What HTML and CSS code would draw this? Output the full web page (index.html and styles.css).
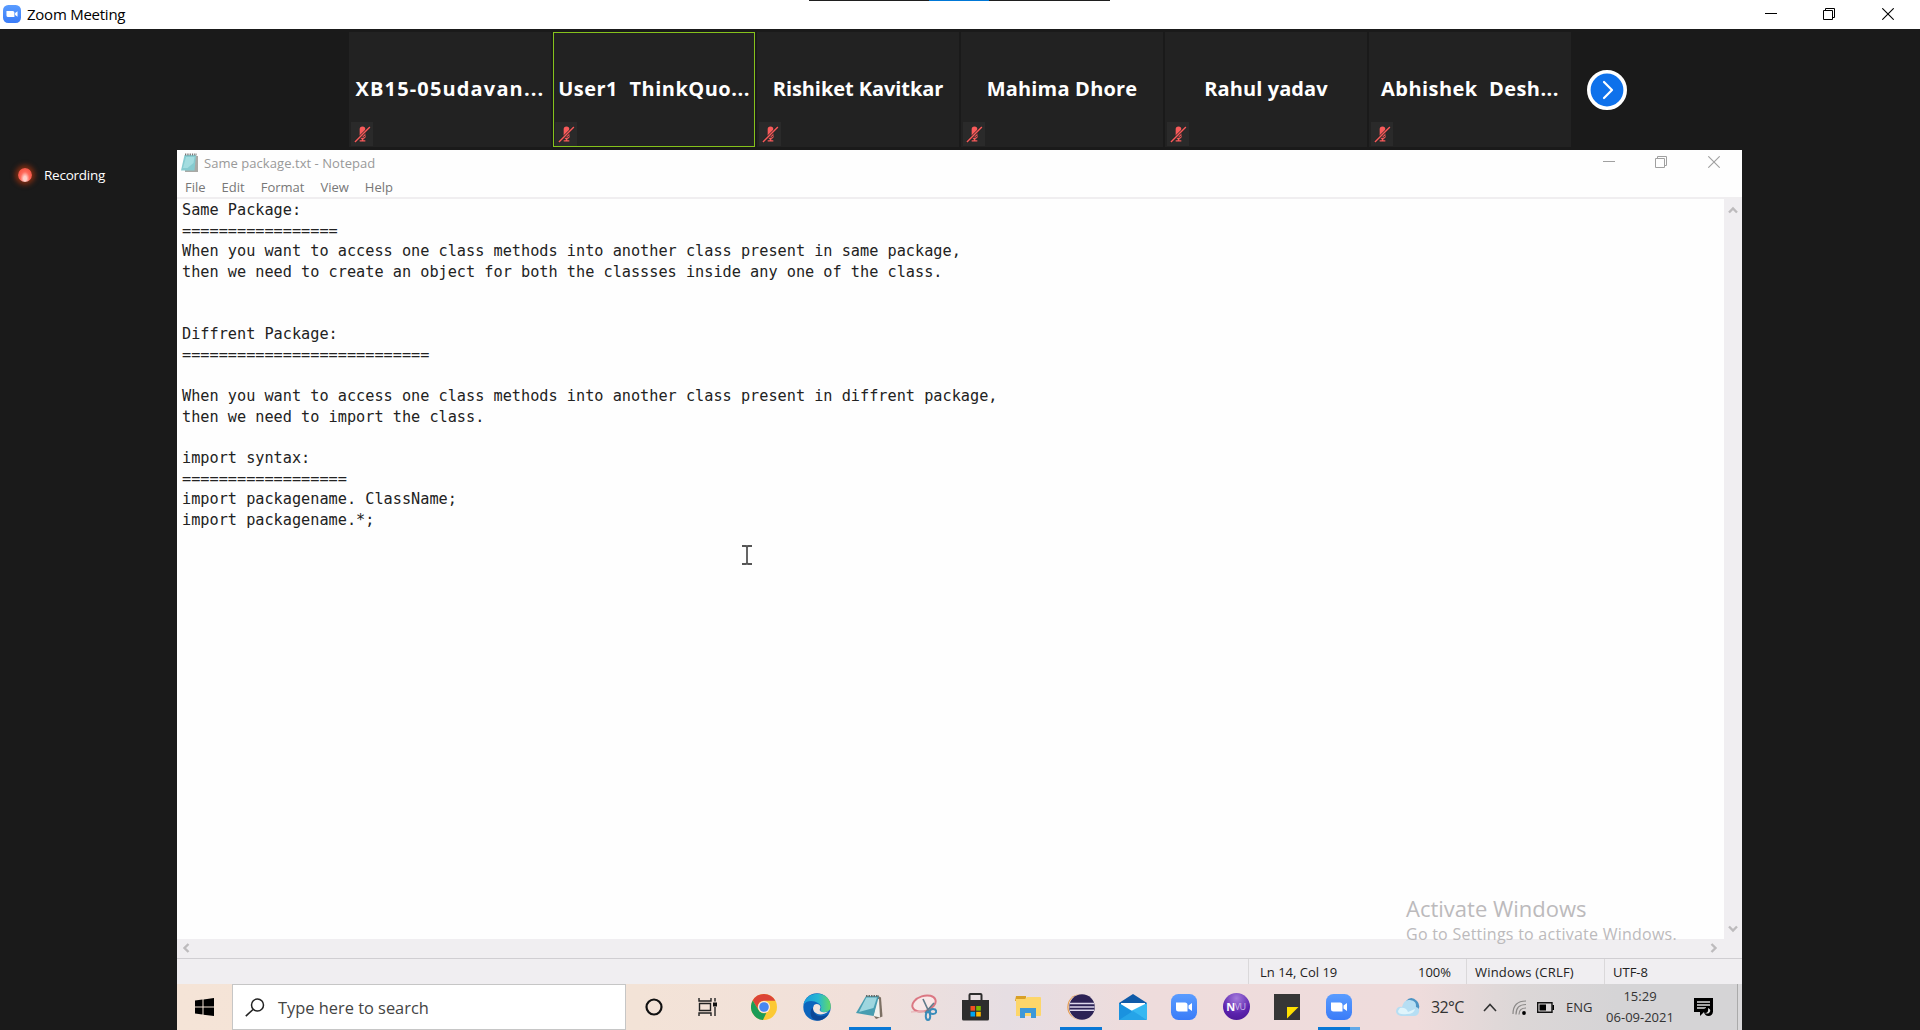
FILE: index.html
```html
<!DOCTYPE html>
<html lang="en">
<head>
<meta charset="utf-8">
<title>Zoom Meeting</title>
<link rel="stylesheet" href="styles.css">
</head>
<body>
<svg class="defs" width="0" height="0">
  <defs>
    <linearGradient id="zoomBlue" x1="0" y1="0" x2="0" y2="1"><stop offset="0" stop-color="#5a9cff"/><stop offset="1" stop-color="#3a7cf8"/></linearGradient>
    <symbol id="zoom" viewBox="0 0 26 26"><rect width="26" height="26" rx="7.5" fill="url(#zoomBlue)"/><path d="M5 8.500h9q2.500 0 2.500 2.500v6.500h-9Q5 17.500 5 15zM17.500 11.500l3.500-2.500v8l-3.500-2.500z" fill="#fff"/></symbol>
    <symbol id="muted" viewBox="0 0 18 18"><path d="M6 3.500a3 3 0 0 1 6 0v5a3 3 0 0 1-6 0zM5.500 8q0 4.500 3.500 4.500T12.500 8v2.500q0 2.500-2.600 3.300V15H12v1.500H6V15h2.200v-1.200q-2.700-.8-2.700-3.300z" fill="#f95a5a"/><path d="M.5 17.500L17 1" stroke="#252525" stroke-width="3"/><path d="M1 17L16.800 1" stroke="#f95a5a" stroke-width="1.500"/></symbol>
    <symbol id="min" viewBox="0 0 12 12"><path d="M0 5.500h12" stroke="currentColor"/></symbol>
    <symbol id="restore" viewBox="0 0 12 12"><path d="M.5 2.500h9v9h-9zM2.500 2.500v-2h9v9h-2" fill="none" stroke="currentColor"/></symbol>
    <symbol id="close" viewBox="0 0 12 12"><path d="M.3.300l11.400 11.400M11.700.3L.3 11.700" stroke="currentColor" stroke-width="1.100"/></symbol>
    <symbol id="chev" viewBox="0 0 10 8"><path d="M1 6.500l4-4 4 4" fill="none" stroke="currentColor" stroke-width="2.400"/></symbol>
  </defs>
</svg>

<header class="titlebar">
  <svg class="app-icon"><use href="#zoom"/></svg>
  <span class="app-name">Zoom Meeting</span>
  <div class="window-buttons">
    <svg><use href="#min"/></svg><svg><use href="#restore"/></svg><svg><use href="#close"/></svg>
  </div>
  <div class="share-strip"></div>
</header>

<section class="gallery">
  <div class="tile"><span class="n1">XB15-05udavan...</span><i class="mic"><svg><use href="#muted"/></svg></i></div>
  <div class="tile active"><span class="n2">User1&nbsp; ThinkQuo...</span><i class="mic"><svg><use href="#muted"/></svg></i></div>
  <div class="tile"><span class="n3">Rishiket Kavitkar</span><i class="mic"><svg><use href="#muted"/></svg></i></div>
  <div class="tile"><span class="n4">Mahima Dhore</span><i class="mic"><svg><use href="#muted"/></svg></i></div>
  <div class="tile"><span class="n5">Rahul yadav</span><i class="mic"><svg><use href="#muted"/></svg></i></div>
  <div class="tile"><span class="n6">Abhishek&nbsp; Desh...</span><i class="mic"><svg><use href="#muted"/></svg></i></div>
  <button class="next" aria-label="Next"><svg viewBox="0 0 40 40"><circle cx="20" cy="20" r="18.200" fill="#0e71eb" stroke="#fff" stroke-width="3.600"/><path d="M17 12l8 8-8 8" fill="none" stroke="#fff" stroke-width="2.200" stroke-linecap="round" stroke-linejoin="round"/></svg></button>
</section>

<main class="stage">
  <aside class="recording"><i class="rec-dot"></i><span>Recording</span></aside>

  <div class="desktop">
    <div class="np-title">
      <svg class="np-icon" viewBox="0 0 18 20"><path d="M4 2l13 1v16H4z" fill="#a9a9a5"/><path d="M3.500 2H15l-1.500 15.500H0z" fill="#86cbd0"/><path d="M5 4h8.500l-1 6-6 5H2z" fill="#a3dde0"/><path d="M4 1.500h12" stroke="#777" stroke-width="2" stroke-dasharray="1.300 1"/></svg>
      <span>Same package.txt - Notepad</span>
      <div class="np-buttons"><svg><use href="#min"/></svg><svg><use href="#restore"/></svg><svg><use href="#close"/></svg></div>
    </div>
    <nav class="menu"><span>File</span><span>Edit</span><span>Format</span><span>View</span><span>Help</span></nav>
    <div class="np-body">
<pre class="text">Same Package:
=================
When you want to access one class methods into another class present in same package,
then we need to create an object for both the classses inside any one of the class.


Diffrent Package:
===========================

When you want to access one class methods into another class present in diffrent package,
then we need to import the class.

import syntax:
==================
import packagename. ClassName;
import packagename.*;</pre>
      <div class="vscroll"><svg><use href="#chev"/></svg><svg class="down"><use href="#chev"/></svg></div>
      <svg class="ibeam" viewBox="0 0 10 20"><path d="M0 1h4l1 1 1-1h4M0 19h4l1-1 1 1h4M5 2v16" fill="none" stroke="#555" stroke-width="1.800"/></svg>
    </div>
    <div class="hscroll"><svg class="left"><use href="#chev"/></svg><svg class="right"><use href="#chev"/></svg></div>
    <div class="status"><span></span><span>Ln 14, Col 19</span><span>100%</span><span class="crlf">Windows (CRLF)</span><span>UTF-8</span></div>
    <div class="watermark"><p class="big">Activate Windows</p><p class="small">Go to Settings to activate Windows.</p></div>

    <footer class="taskbar">
      <div class="start"><svg width="19" height="18" viewBox="0 0 19 18"><path d="M0 2.600l7.500-1v7H0zM8.500 1.400L19 0v8.600H8.500zM0 9.600h7.500v7L0 15.600zM8.500 9.600H19V18L8.500 16.800z"/></svg></div>
      <div class="search"><svg width="20" height="19" viewBox="0 0 20 19"><circle cx="12.500" cy="7" r="6" fill="none" stroke="#222" stroke-width="1.500"/><path d="M8 11.500L.8 18.200" stroke="#222" stroke-width="1.600"/></svg><span>Type here to search</span></div>
      <div class="apps">
        <div class="app"><svg width="18" height="18" viewBox="0 0 18 18"><circle cx="9" cy="9" r="7.500" fill="none" stroke="#111" stroke-width="2.200"/></svg></div>
        <div class="app"><svg width="20" height="18" viewBox="0 0 20 18"><path d="M1 0v3h12V0M1 18v-3h12v3M1.500 5.500h11v7h-11zM17 0v3.500M17 9v9" fill="none" stroke="#222" stroke-width="1.400"/><path d="M15 4.500h4v4h-4z" fill="#111"/></svg></div>
        <div class="app"><svg width="26" height="26" viewBox="0 0 26 26"><circle cx="13" cy="13" r="13" fill="#fcc934"/><path d="M1.700 6.500A13 13 0 0 1 24.300 6.800H13a6.300 6.300 0 0 0-5.600 9.200z" fill="#dc4437"/><path d="M1.700 6.500L7.500 16a6.300 6.300 0 0 0 7.800 2.900L12 26A13 13 0 0 1 1.700 6.500z" fill="#1b9c57"/><circle cx="13" cy="13" r="6.100" fill="#fbe9e0"/><circle cx="13" cy="13" r="4.800" fill="#4687f2"/></svg></div>
        <div class="app"><svg width="28" height="28" viewBox="0 0 28 28"><defs><linearGradient id="edgeTop"><stop offset="0" stop-color="#199bdc"/><stop offset=".55" stop-color="#27b7d2"/><stop offset="1" stop-color="#65db62"/></linearGradient></defs><circle cx="14" cy="14" r="13.700" fill="#0c65bd"/><path d="M.6 11.500C3-3 27-3 27.700 13c.2 5-4 6.500-8 6-3-.5-2.700-2-1.700-3.400C20 10 6 4 .6 11.500z" fill="url(#edgeTop)"/><path d="M10 15c0 8 8 10.500 15.500 6C18 32 5 28 8 17q.7-2 2-2z" fill="#0b4797"/><path d="M11 12c4-3 8 1 6 4-1.400 2.200 3 4.500 8.500 2.500C18 24 10 21 10 15z" fill="#f1e5df"/></svg></div>
        <div class="app running"><svg width="27" height="26" viewBox="0 0 27 26"><path d="M21 1.500l4 2 1.500 19L20 25l-3-4z" fill="#7d7064"/><path d="M21 5l-3.500 17 6.500 1.500L23 5z" fill="#f2f1ed"/><path d="M10 2h13l-5.500 20L0 19z" fill="#489db1"/><path d="M10.300 3.500H21L17.500 14 3 18z" fill="#9ed6df"/><path d="M10 2h13" stroke="#656d6b" stroke-width="2" stroke-dasharray="1.500 1"/></svg></div>
        <div class="app"><svg width="27" height="27" viewBox="0 0 27 27"><ellipse cx="14" cy="9.500" rx="12" ry="7.500" transform="rotate(-18 14 9.500)" fill="#f8e8e8" stroke="#db7783" stroke-width="2"/><path d="M1 18l16-1" stroke="#e7aab0"/><path d="M13 5l6 13M24 9l-9 10" stroke="#627b8b" stroke-width="1.700"/><g fill="none" stroke="#398cba" stroke-width="2"><ellipse cx="18" cy="22" rx="2.200" ry="4"/><ellipse cx="23" cy="17.500" rx="3.200" ry="2.500"/></g></svg></div>
        <div class="app"><svg width="27" height="28" viewBox="0 0 27 28"><path d="M7.500 8V2q0-1 1-1h10q1 0 1 1v6" fill="none" stroke="#2d2d2d" stroke-width="2"/><path d="M0 7h27v19q0 1.500-1.500 1.500h-24Q0 27.500 0 26z" fill="#2d2d2d"/><path d="M8.500 13h4.600v4.700H8.500z" fill="#f25022"/><path d="M14.200 13h4.600v4.700h-4.600z" fill="#7fba00"/><path d="M8.500 18.800h4.600v4.700H8.500z" fill="#00a4ef"/><path d="M14.200 18.800h4.600v4.700h-4.600z" fill="#ffb900"/></svg></div>
        <div class="app"><svg width="26" height="22" viewBox="0 0 26 22"><path d="M1 0h10v5H0z" fill="#d9a027"/><path d="M1 3h9l2-2h13q1 0 1 1v17q0 1-1 1H1z" fill="#fdd66a"/><path d="M5 12h16v10h-5v-5h-6v5H5z" fill="#3d98d8"/></svg></div>
        <div class="app running"><svg width="28" height="26" viewBox="0 0 28 26"><circle cx="13" cy="13" r="12.700" fill="#e59a4c"/><circle cx="14.500" cy="13" r="13" fill="#f0e6e8"/><circle cx="15" cy="13" r="12.800" fill="#2c2255"/><path d="M3 9.500h24M2.500 13h25M3 16.300h24" stroke="#ddd8ed" stroke-width="1.600"/></svg></div>
        <div class="app"><svg width="28" height="26" viewBox="0 0 28 26"><path d="M0 9l14-9 14 9v5H0z" fill="#0f5aa8"/><path d="M2 9h24v9H2z" fill="#fff"/><path d="M0 9l28 17H0z" fill="#1a92df"/><path d="M28 9v17L12 17z" fill="#35b8f2"/><path d="M0 26h28L14 17z" fill="#25a4e8"/></svg></div>
        <div class="app"><svg width="26" height="26"><use href="#zoom"/></svg></div>
        <div class="app nvu"><b>N</b>VU</div>
        <div class="app"><svg width="26" height="26" viewBox="0 0 26 26"><path d="M0 0h26v13L13 26H0z" fill="#363636"/><path d="M13 26V13h13v13z" fill="#363636"/><path d="M13 13h11.500L13 24.500z" fill="#ffe000"/></svg></div>
        <div class="app running zoom-app"><svg width="26" height="26"><use href="#zoom"/></svg></div>
      </div>
      <div class="tray">
        <svg class="weather" viewBox="0 0 24 19"><path d="M10 3q5-6 11 0 4 4 1 10L12 9z" fill="#4c94c4"/><path d="M5 18q-5-1-5-5 1-5 6-4Q8 1 14 2q7 1 6 7 4 1 3 5-1 4-5 4z" fill="#b6def3"/><path d="M4 10q6-1 8 4l7-3q-1 5-8 5-9 1-9-3z" fill="#dff4fb"/></svg>
        <span class="temp">32°C</span>
        <svg class="up" viewBox="0 0 14 9"><path d="M1 8l6-6.500L13 8" fill="none" stroke="#333" stroke-width="1.600"/></svg>
        <svg class="wifi" viewBox="0 0 15 15"><g fill="none" stroke="#8b8988" stroke-width="1.200"><path d="M1 14Q1 1 14 1M4 14.500Q4 4.500 14 4.500M7 14.500Q7 8 14 8"/></g><circle cx="12" cy="13" r="1.900"/></svg>
        <svg class="battery" viewBox="0 0 17 11"><path d="M.7.700h14.300v9.600H.7z" fill="none" stroke="#111" stroke-width="1.400"/><path d="M2.500 2.500h6.500v6H2.500zM15.500 3H17v5h-1.500z"/></svg>
        <span class="lang">ENG</span>
        <div class="clock"><span>15:29</span><span class="date">06-09-2021</span></div>
        <svg class="notice" viewBox="0 0 19 19"><path d="M0 0h19v14h-9l-4 4v-4H0z"/><path d="M3 4h13M3 7h13M3 10h9" stroke="#ddd" stroke-width="1.300"/><circle cx="14.500" cy="13.500" r="4.500"/><path d="M14 10q4 2 1 5-2 1-4 0 4 0 3-5z" fill="#ddd"/></svg>
      </div>
    </footer>
  </div>
</main>
</body>
</html>
```
FILE: styles.css
```css
* { box-sizing: border-box; }
body {
  margin: 0;
  width: 1920px;
  height: 1030px;
  overflow: hidden;
  background: #1a1a1a;
  font-family: "Open Sans", "Noto Sans", sans-serif;
  display: flex;
  flex-direction: column;
}
.defs { position: absolute; }
svg { display: block; flex: none; }
p { margin: 0; }

/* Meeting window */
.titlebar {
  position: relative;
  flex: none;
  height: 29px;
  background: #fff;
  display: flex;
  align-items: center;
  padding: 0 26px 0 3px;
}
.app-icon { width: 18px; height: 18px; margin-top: -1px; }
.app-name { margin: -2px 0 0 6px; font-size: 15px; letter-spacing: -0.25px; color: #000; white-space: nowrap; }
.window-buttons { margin: -1px 0 0 auto; display: flex; gap: 46px; }
.window-buttons svg { width: 12px; height: 12px; }
.window-buttons svg:last-child { margin-left: 1px; }
.share-strip {
  position: absolute;
  top: 0; left: 809px;
  width: 301px; height: 1px;
  background: linear-gradient(90deg, #1f1f1f 120px, #0078d7 120px 180px, #1f1f1f 180px);
}
.gallery {
  flex: none;
  height: 121px;
  padding: 3px 0 3px 349px;
  display: flex;
  gap: 2px;
}
.tile {
  position: relative;
  width: 202px;
  height: 115px;
  background: #222;
  color: #fff;
  font-size: 20px;
  font-weight: 700;
  white-space: nowrap;
  display: flex;
  align-items: center;
  justify-content: center;
}
.tile.active { outline: 1px solid #85c21c; outline-offset: -1px; }
.tile span { margin-top: -2px; }
.tile .n1 { letter-spacing: 1.15px; }
.tile .n2 { letter-spacing: 0.5px; }
.tile .n3 { letter-spacing: -0.07px; }
.tile .n4 { letter-spacing: 0.2px; }
.tile .n5 { letter-spacing: 0.1px; }
.tile .n6 { letter-spacing: 0.45px; }
.mic {
  position: absolute;
  left: 2px; bottom: 1px;
  width: 22px; height: 24px;
  background: #2a2a2a;
  display: grid;
  place-items: center;
}
.mic svg { width: 17px; height: 17px; }
.next { width: 40px; height: 40px; margin: 38px 0 0 14px; padding: 0; border: 0; background: none; }

/* Shared desktop */
.stage { flex: none; height: 880px; display: flex; }
.recording {
  flex: none;
  width: 177px;
  height: 50px;
  padding-left: 17px;
  display: flex;
  align-items: center;
  color: #fff;
  font-size: 13.5px;
  letter-spacing: -0.25px;
}
.rec-dot {
  width: 14px; height: 14px;
  margin-left: 1px;
  border-radius: 50%;
  background: radial-gradient(ellipse at 50% 75%, #ffd0c8 0 15%, #ff6b5c 45%, #e8402c 100%);
  box-shadow: 0 0 5px 3px #7c2c12;
}
.recording span { margin-left: 12px; }
.desktop {
  position: relative;
  width: 1565px;
  height: 880px;
  background: #fefefe;
  display: flex;
  flex-direction: column;
}
.np-title { height: 25px; padding: 1px 22px 0 4px; display: flex; align-items: center; color: #999; font-size: 13px; }
.np-icon { width: 18px; height: 20px; margin-top: 0; }
.np-title span { margin-left: 5px; white-space: nowrap; letter-spacing: 0.05px; }
.np-buttons { margin: -3px 0 0 auto; display: flex; gap: 40px; color: #a0a0a0; }
.np-buttons svg { width: 12px; height: 12px; }
.np-buttons svg:last-child { margin-left: 1px; }
.menu { height: 24px; padding: 2px 0 0 8px; border-bottom: 2px solid #f0eef0; display: flex; gap: 16px; align-items: center; color: #777; font-size: 13px; }
.np-body { position: relative; height: 740px; display: flex; justify-content: space-between; }
.text {
  margin: 0;
  padding: 1px 0 0 5px;
  font-family: "DejaVu Sans Mono", monospace;
  font-size: 15.23px;
  line-height: 20.65px;
  color: #222;
}
.vscroll { width: 18px; background: #f0eef1; color: #bdbbbd; display: flex; flex-direction: column; justify-content: space-between; align-items: center; padding: 7px 0 6px; }
.vscroll svg, .hscroll svg { width: 10px; height: 8px; }
.down { transform: rotate(180deg); }
.left { transform: rotate(-90deg); }
.right { transform: rotate(90deg); }
.ibeam { position: absolute; left: 565px; top: 346px; width: 10px; height: 20px; }
.hscroll { height: 20px; background: #f0eef1; border-bottom: 1px solid #d0ced2; display: flex; justify-content: space-between; align-items: center; padding: 0 23px 2px 4px; color: #bdbbbd; }
.status {
  height: 25px;
  background: #f0eef1;
  display: grid;
  grid-template-columns: 1071px 170px 48px 138px 1fr;
  color: #222;
  font-size: 13px;
  white-space: nowrap;
}
.status span { height: 25px; line-height: 26px; border-left: 1px solid #dad8da; padding-left: 11px; }
.status span:first-child { border: 0; }
.status span:nth-child(3) { border: 0; padding-left: 0; }
.status .crlf { padding-left: 8px; letter-spacing: 0.2px; }
.status span:last-child { padding-left: 8px; }
.watermark { position: absolute; left: 1229px; top: 743px; color: #bcbabc; white-space: nowrap; }
.big { font-size: 22px; line-height: 30px; }
.small { font-size: 16px; line-height: 23px; letter-spacing: 0.25px; }

/* Taskbar */
.taskbar {
  height: 46px;
  display: flex;
  background: linear-gradient(90deg, #f5e4d7 0, #f3e3d7 460px, #f1e0da 680px, #e6dee3 830px, #eedcdc 960px, #efdcdc 1240px, #dcd7d7 1340px, #d5d4d6 1440px, #d5d4d6 1560px, #aaa 1560px 1561px, #d9d8da 1561px);
}
.start { width: 55px; padding: 14px 0 0 18px; }
.search { width: 394px; height: 46px; background: #fff; border: 1px solid #c6c6c6; display: flex; align-items: center; padding-left: 12px; color: #444; font-size: 16.4px; white-space: nowrap; }
.search span { margin-left: 13px; }
.apps { width: 770px; display: grid; grid-template-columns: 55px 54px 58px 48px 57px 50px 54px 52px 54px 49px 54px 50px 52px 52px; }
.app { height: 46px; display: grid; place-items: center; position: relative; }
.running::after { content: ""; position: absolute; left: calc(50% - 21px); bottom: 0; width: 42px; height: 3px; background: #0a78d6; }
.zoom-app::after { background: linear-gradient(90deg, #0a78d6 32px, #62a9e8 32px); }
.nvu {
  width: 27px; height: 27px; margin: 9px auto 0;
  border-radius: 50%;
  display: flex; align-items: center; justify-content: center;
  background: radial-gradient(circle at 50% 20%, #a47bdc, #5b22ad 60%, #48168f);
  color: #d0bbe9; font-size: 9px; letter-spacing: -0.5px;
}
.nvu b { color: #fff; font-size: 11px; }
.tray { display: flex; align-items: center; color: #333; white-space: nowrap; }
.weather { width: 24px; height: 19px; }
.temp { width: 52px; margin-left: 11px; font-size: 16px; letter-spacing: -0.6px; }
.up { width: 14px; height: 9px; }
.wifi { width: 15px; height: 15px; margin-left: 15px; }
.battery { width: 17px; height: 11px; margin-left: 10px; }
.lang { width: 40px; margin-left: 12px; font-size: 13px; }
.clock { width: 68px; height: 46px; display: flex; flex-direction: column; align-items: center; padding-top: 2px; font-size: 13px; line-height: 20.5px; }
.notice { width: 19px; height: 19px; margin-left: 20px; }
```
